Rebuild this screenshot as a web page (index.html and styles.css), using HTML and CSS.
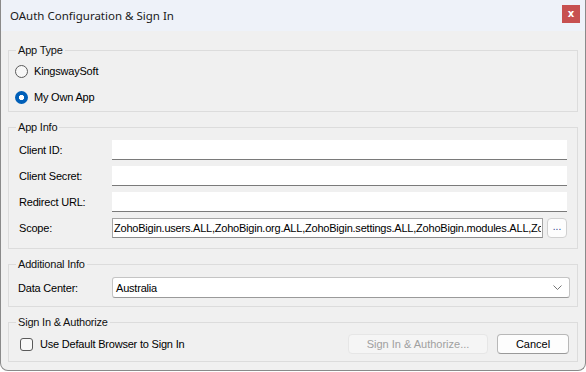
FILE: index.html
```html
<!DOCTYPE html>
<html>
<head>
<meta charset="utf-8">
<title>OAuth Configuration &amp; Sign In</title>
<link rel="stylesheet" href="styles.css">
</head>
<body>
<div class="window">
  <div class="titlebar">
    <span class="title">OAuth Configuration &amp; Sign In</span>
    <span class="close">x</span>
  </div>
  <div class="content">
    <fieldset class="group">
      <legend>App Type</legend>
      <div class="body body-type">
        <label class="radio-row"><span class="radio"></span>KingswaySoft</label>
        <label class="radio-row"><span class="radio checked"></span>My Own App</label>
      </div>
    </fieldset>

    <fieldset class="group">
      <legend>App Info</legend>
      <div class="body body-info">
        <div class="field-row">
          <span class="field-label">Client ID:</span>
          <input class="text-input" type="text">
        </div>
        <div class="field-row">
          <span class="field-label">Client Secret:</span>
          <input class="text-input" type="text">
        </div>
        <div class="field-row">
          <span class="field-label">Redirect URL:</span>
          <input class="text-input" type="text">
        </div>
        <div class="field-row">
          <span class="field-label">Scope:</span>
          <input class="text-input scope-input" type="text" value="ZohoBigin.users.ALL,ZohoBigin.org.ALL,ZohoBigin.settings.ALL,ZohoBigin.modules.ALL,ZohoBigin.notifications.ALL">
          <button class="ellipsis-btn" type="button">...</button>
        </div>
      </div>
    </fieldset>

    <fieldset class="group">
      <legend>Additional Info</legend>
      <div class="body body-extra">
        <div class="field-row">
          <span class="field-label wide">Data Center:</span>
          <div class="select">
            <span class="select-text">Australia</span>
            <svg class="chevron" width="9" height="5" viewBox="0 0 9 5"><path d="M0.5 0.5 L4.5 4.5 L8.5 0.5" fill="none" stroke="#666" stroke-width="0.9"/></svg>
          </div>
        </div>
      </div>
    </fieldset>

    <fieldset class="group">
      <legend>Sign In &amp; Authorize</legend>
      <div class="body body-sign">
        <label class="check-row"><span class="checkbox"></span>Use Default Browser to Sign In</label>
        <div class="actions">
          <button class="btn btn-disabled" type="button" disabled>Sign In &amp; Authorize...</button>
          <button class="btn btn-cancel" type="button">Cancel</button>
        </div>
      </div>
    </fieldset>
  </div>
</div>
</body>
</html>
```

FILE: styles.css
```css
html, body {
  margin: 0;
  padding: 0;
  background: #ffffff;
}

body {
  font-family: "Liberation Sans", Arial, sans-serif;
  font-size: 11px;
  letter-spacing: -0.2px;
  color: #000;
}

.window {
  box-sizing: border-box;
  width: 586px;
  height: 371px;
  background: #f0f0f0;
  border: 1px solid #8a8a8a;
  border-top: none;
  border-radius: 0 0 8px 8px;
  overflow: hidden;
  display: flex;
  flex-direction: column;
}

.titlebar {
  height: 31px;
  flex: 0 0 31px;
  background: #eef2f9;
  display: flex;
  align-items: flex-start;
  padding-left: 9px;
}

.title {
  font-family: "Noto Sans", "Open Sans", sans-serif;
  font-size: 11.5px;
  letter-spacing: 0;
  line-height: 16px;
  margin-top: 8px;
  color: #1a1a1a;
}

.close {
  margin-left: auto;
  margin-right: 5px;
  margin-top: 5px;
  width: 18px;
  height: 18px;
  background: #c75050;
  color: #fff;
  font-family: "DejaVu Sans", sans-serif;
  font-weight: bold;
  font-size: 10px;
  letter-spacing: 0;
  line-height: 17px;
  text-align: center;
}

.content {
  padding: 13px 7px 0 7px;
  display: flex;
  flex-direction: column;
  gap: 9px;
}

.group {
  margin: 0;
  padding: 0;
  min-width: 0;
  border: 1px solid #dcdcdc;
}

.group legend {
  margin-left: 7px;
  padding: 0 2px;
  line-height: 13px;
  font-size: 11px;
  color: #111;
}

.body-type {
  padding: 4px 0 4px 6px;
  display: flex;
  flex-direction: column;
  gap: 6px;
}

.radio-row {
  display: flex;
  align-items: center;
  height: 20px;
  gap: 6px;
}

.radio {
  box-sizing: border-box;
  width: 13px;
  height: 13px;
  border-radius: 50%;
  border: 1px solid #5a5a5a;
  background: #f7f7f7;
}

.radio.checked {
  border: none;
  background: radial-gradient(circle, #ffffff 0 2.4px, #005fb8 2.9px);
}

.body-info {
  padding: 6px 10px 10px 10px;
  display: flex;
  flex-direction: column;
  gap: 6px;
}

.field-row {
  display: flex;
  align-items: center;
  height: 20px;
}

.field-label {
  width: 93px;
  flex: 0 0 93px;
}

.field-label.wide {
  width: 94px;
  flex: 0 0 94px;
}

.text-input {
  box-sizing: border-box;
  flex: 1;
  min-width: 0;
  height: 20px;
  margin: 0;
  padding: 0 2px;
  border: none;
  border-bottom: 1px solid #7a7a7a;
  background: #fff;
  font: inherit;
  letter-spacing: -0.2px;
  color: #000;
  outline: none;
}

.scope-input {
  border: 1px solid #a5a5a5;
  border-bottom-color: #8a8a8a;
  padding: 0 1px;
  letter-spacing: -0.22px;
}

.ellipsis-btn {
  box-sizing: border-box;
  width: 20px;
  height: 20px;
  margin: 0 0 0 4px;
  padding: 0 0 2px 0;
  border: 1px solid #d0d0d0;
  border-radius: 4px;
  background: #fdfdfd;
  font: inherit;
  font-size: 10px;
  letter-spacing: 0;
  color: #2b3f8f;
  line-height: 14px;
}

.body-extra {
  padding: 6px 7px 8px 9px;
}

.body-extra .field-row {
  height: 21px;
}

.select {
  box-sizing: border-box;
  flex: 1;
  height: 21px;
  display: flex;
  align-items: center;
  justify-content: space-between;
  padding: 0 7px 0 3px;
  background: #fff;
  border: 1px solid #c4c4c4;
  border-bottom-color: #9a9a9a;
  border-radius: 3px;
}

.body-sign {
  padding: 5px 8px 7px 11px;
  display: flex;
  align-items: center;
  justify-content: space-between;
  height: 20px;
}

.check-row {
  display: flex;
  align-items: center;
  gap: 7px;
}

.checkbox {
  box-sizing: border-box;
  width: 13px;
  height: 13px;
  border: 1px solid #5a5a5a;
  border-radius: 3px;
  background: #f9f9f9;
}

.actions {
  display: flex;
  gap: 9px;
}

.btn {
  box-sizing: border-box;
  height: 20px;
  margin: 0;
  padding: 0;
  border-radius: 4px;
  font: inherit;
  font-size: 11px;
}

.btn-disabled {
  width: 140px;
  background: #f5f5f5;
  border: 1px solid #e6e6e6;
  color: #a0a0a0;
}

.btn-cancel {
  width: 72px;
  background: #fdfdfd;
  border: 1px solid #b8b8b8;
  border-bottom-color: #9a9a9a;
  color: #000;
}
```
